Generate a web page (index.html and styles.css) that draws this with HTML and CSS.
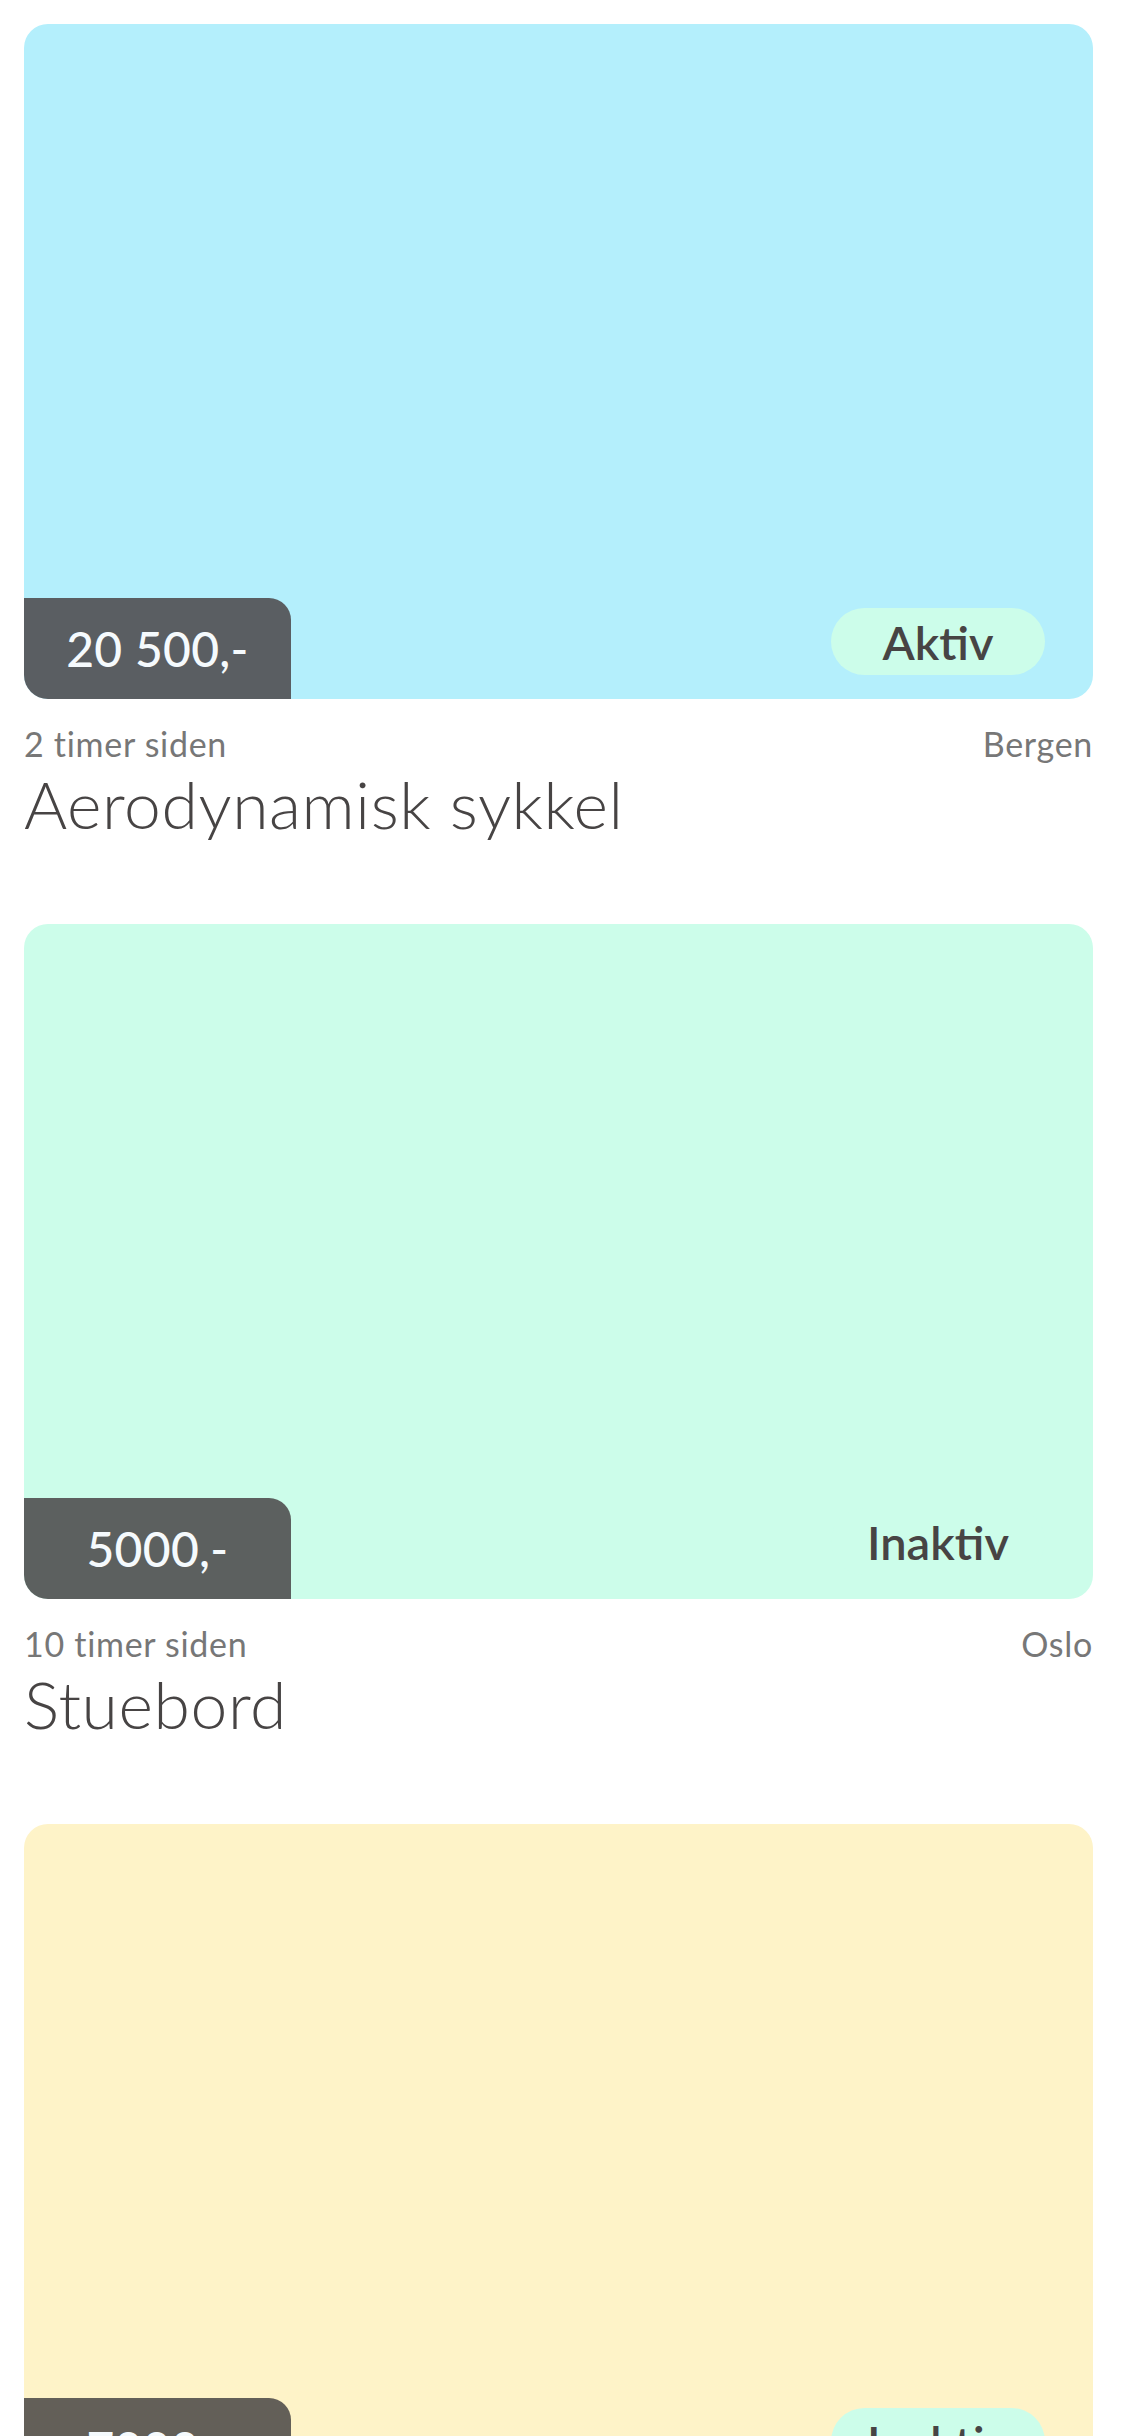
FILE: index.html
```html
<!DOCTYPE html>
<html lang="no">
<head>
<meta charset="utf-8">
<title>Annonser</title>
<link rel="stylesheet" href="styles.css">
</head>
<body>
<main class="feed">
  <article class="ad ad--blue">
    <div class="ad__media">
      <span class="ad__price">20 500,-</span>
      <span class="ad__status">Aktiv</span>
    </div>
    <div class="ad__meta">
      <span>2 timer siden</span>
      <span>Bergen</span>
    </div>
    <h2 class="ad__title">Aerodynamisk sykkel</h2>
  </article>
  <article class="ad ad--green">
    <div class="ad__media">
      <span class="ad__price">5000,-</span>
      <span class="ad__status">Inaktiv</span>
    </div>
    <div class="ad__meta">
      <span>10 timer siden</span>
      <span>Oslo</span>
    </div>
    <h2 class="ad__title">Stuebord</h2>
  </article>
  <article class="ad ad--yellow">
    <div class="ad__media">
      <span class="ad__price">7000,-</span>
      <span class="ad__status">Inaktiv</span>
    </div>
    <div class="ad__meta">
      <span>1 dag siden</span>
      <span>Trondheim</span>
    </div>
    <h2 class="ad__title">Sofa</h2>
  </article>
</main>
</body>
</html>
```

FILE: styles.css
```css
* {
  box-sizing: border-box;
}

html, body {
  margin: 0;
  padding: 0;
  background: #ffffff;
}

body {
  font-family: "Lato", "Noto Sans", sans-serif;
  color: #474444;
}

.feed {
  display: flex;
  flex-direction: column;
  padding: 24px 32px 0 24px;
}

.ad {
  display: flex;
  flex-direction: column;
  margin-bottom: 80px;
}

.ad__media {
  position: relative;
  height: 675px;
  border-radius: 24px;
  overflow: hidden;
  background: #b4effc;
}

.ad--blue .ad__media { background: #b4effc; }
.ad--green .ad__media { background: #ccfdea; }
.ad--yellow .ad__media { background: #fef3c8; }

.ad__price {
  position: absolute;
  left: 0;
  bottom: 0;
  width: 267px;
  height: 101px;
  display: flex;
  align-items: center;
  justify-content: center;
  border-top-right-radius: 22px;
  background: #5a5e62;
  color: #f5fafd;
  font-size: 48px;
  font-weight: 500;
  letter-spacing: 0.3px;
}

.ad--green .ad__price { background: #5c605f; }
.ad--yellow .ad__price { background: #635f58; }

.ad__status {
  position: absolute;
  right: 48px;
  bottom: 24px;
  width: 214px;
  height: 67px;
  display: flex;
  align-items: center;
  justify-content: center;
  border-radius: 34px;
  background: #ccfdea;
  color: #474444;
  font-size: 47px;
  font-weight: 600;
}

.ad__meta {
  display: flex;
  justify-content: space-between;
  margin-top: 25px;
  height: 40px;
  line-height: 40px;
  font-size: 34px;
  letter-spacing: 0.7px;
  color: #777777;
}

.ad__title {
  margin: 0;
  height: 80px;
  line-height: 80px;
  font-size: 66px;
  font-weight: 300;
  letter-spacing: 0.6px;
  color: #474444;
}
```
